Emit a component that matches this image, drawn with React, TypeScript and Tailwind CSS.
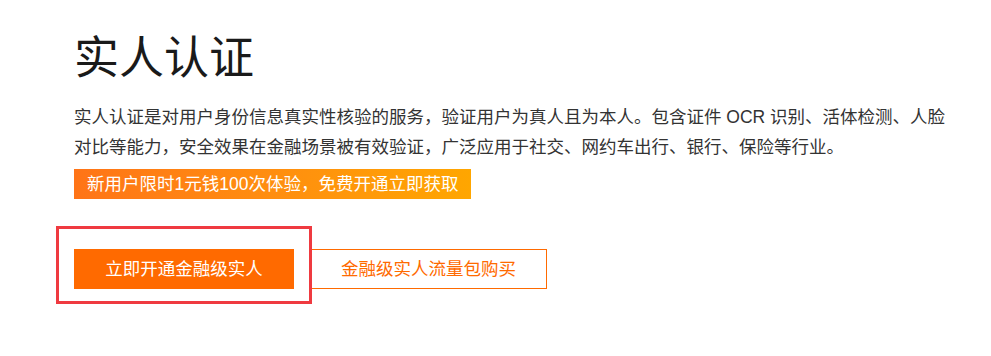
const font = {
  fontFamily: '"Liberation Sans", "Noto Sans CJK SC", sans-serif',
};

export default function App() {
  return (
    <div className="w-[991px] h-[356px] bg-white" style={font}>
      <div className="pl-[74px] pt-[29px]">
        {/* title */}
        <h1 className="text-[45px] leading-[60px] text-[#1a1a1a] font-normal">
          实人认证
        </h1>
        {/* description */}
        <p className="mt-[13px] w-[878px] text-[17.5px] leading-[30px] text-[#333]">
          实人认证是对用户身份信息真实性核验的服务，验证用户为真人且为本人。包含证件 OCR 识别、活体检测、人脸对比等能力，安全效果在金融场景被有效验证，广泛应用于社交、网约车出行、银行、保险等行业。
        </p>
        {/* promo */}
        <div className="mt-[7px] inline-flex h-[30px] items-center px-[13px] text-[17.5px] text-white bg-gradient-to-r from-[#ff7417] to-[#ffa600]">
          新用户限时1元钱100次体验，免费开通立即获取
        </div>
        {/* buttons */}
        <div className="mt-[50px] flex items-center">
          <div className="relative">
            <button className="w-[220px] h-[40px] bg-[#ff6a00] text-white text-[17.5px]">
              立即开通金融级实人
            </button>
            <div className="absolute left-[-18px] top-[-23px] w-[256px] h-[78px] border-[3px] border-[#ef3a40]" />
          </div>
          <button className="ml-[16px] w-[237px] h-[40px] border border-[#ff6a00] text-[#ff6a00] text-[17.5px] bg-white">
            金融级实人流量包购买
          </button>
        </div>
      </div>
    </div>
  );
}
